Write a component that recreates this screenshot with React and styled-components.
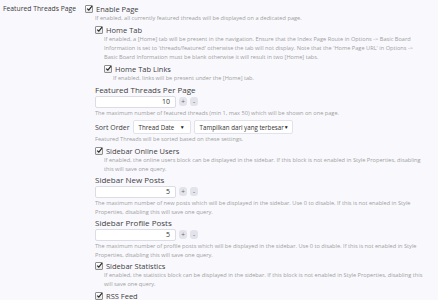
import React from "react";
import styled, { createGlobalStyle } from "styled-components";

const Global = createGlobalStyle`
  html, body { margin: 0; padding: 0; background: #f9f9fd; }
  body { font-family: "Open Sans", "Liberation Sans", sans-serif; color: #3c3c3c; }
`;

const Page = styled.div`
  width: 438px;
  height: 300px;
  overflow: hidden;
  background: #f9f9fd;
  padding-top: 4px;
  box-sizing: border-box;
`;

const FormRow = styled.div`
  display: flex;
`;

const RowLabel = styled.div`
  width: 82px;
  padding-left: 3px;
  font-size: 6.8px;
  line-height: 10px;
  color: #3a3a3a;
  flex-shrink: 0;
  white-space: nowrap;
`;

const Controls = styled.div`
  display: flex;
  flex-direction: column;
  flex: 1;
`;

const Item = styled.div`
  display: flex;
  flex-direction: column;
  margin-top: ${(p) => p.$mt ?? 0}px;
  padding-left: ${(p) => p.$indent ?? 0}px;
`;

const CheckLine = styled.label`
  display: flex;
  align-items: center;
  height: 10px;
  font-size: 7.5px;
  color: #3d3d3d;
  white-space: nowrap;
`;

const Box = styled.span`
  width: 6px;
  height: 6px;
  border: 1px solid #8f8f8f;
  border-radius: 1px;
  background: linear-gradient(#ffffff, #e6e6e6);
  margin-right: 3px;
  position: relative;
  flex-shrink: 0;
  svg { position: absolute; left: 0; top: -1px; }
`;

const Hint = styled.div`
  font-size: 5.65px;
  line-height: 9px;
  color: #a0a0a0;
  white-space: nowrap;
  padding-left: ${(p) => p.$indent ?? 0}px;
  margin-top: ${(p) => p.$mt ?? 0}px;
`;

const FieldTitle = styled.div`
  font-size: 8px;
  line-height: 11px;
  color: #3d3d3d;
  white-space: nowrap;
`;

const SpinRow = styled.div`
  display: flex;
  align-items: center;
  gap: 3px;
  height: 13px;
`;

const NumInput = styled.div`
  width: 81px;
  height: 12px;
  box-sizing: border-box;
  border: 1px solid #dcdce4;
  border-radius: 2px;
  background: #fff;
  font-size: 7px;
  line-height: 10px;
  text-align: right;
  padding-right: 5px;
  color: #333;
`;

const SpinButton = styled.span`
  width: 8px;
  height: 9px;
  border-radius: 3px;
  background: #e3e3ec;
  color: #666;
  font-size: 6.5px;
  line-height: 9px;
  text-align: center;
`;

const SortRow = styled.div`
  display: flex;
  align-items: center;
  height: 16px;
  gap: 3px;
  font-size: 7px;
  color: #3d3d3d;
  white-space: nowrap;
`;

const Select = styled.div`
  width: ${(p) => p.$w}px;
  height: 14px;
  box-sizing: border-box;
  border: 1px solid #e2e2ea;
  border-radius: 2px;
  background: #fff;
  display: flex;
  align-items: center;
  justify-content: space-between;
  padding: 0 5px 0 5px;
  font-size: 6.2px;
  color: #333;
  white-space: nowrap;
`;

const Arrow = styled.span`
  font-size: 5px;
  color: #222;
`;

function Check({ children }) {
  return (
    <CheckLine>
      <Box>
        <svg width="7" height="7" viewBox="0 0 7 7">
          <path d="M1.2 3.6 L2.8 5.2 L6 1.2" fill="none" stroke="#2a2a2a" strokeWidth="1.2" />
        </svg>
      </Box>
      {children}
    </CheckLine>
  );
}

function Spin({ value }) {
  return (
    <SpinRow>
      <NumInput>{value}</NumInput>
      <SpinButton>+</SpinButton>
      <SpinButton>-</SpinButton>
    </SpinRow>
  );
}

export default function App() {
  return (
    <Page>
      <Global />
      <FormRow>
        <RowLabel>Featured Threads Page</RowLabel>
        <Controls>
          <Check>Enable Page</Check>
          <Item $indent={10}>
            <Hint>If enabled, all currently featured threads will be displayed on a dedicated page.</Hint>
            <Item $mt={2}>
              <Check>Home Tab</Check>
              <Hint $indent={9}>
                If enabled, a [Home] tab will be present in the navigation. Ensure that the Index Page Route in Options -&gt; Basic Board
                <br />
                Information is set to 'threads/featured' otherwise the tab will not display. Note that the 'Home Page URL' in Options -&gt;
                <br />
                Basic Board Information must be blank otherwise it will result in two [Home] tabs.
              </Hint>
              <Item $mt={2} $indent={9}>
                <Check>Home Tab Links</Check>
                <Hint $indent={9}>If enabled, links will be present under the [Home] tab.</Hint>
              </Item>
            </Item>
            <Item $mt={1}>
              <FieldTitle>Featured Threads Per Page</FieldTitle>
              <Spin value="10" />
              <Hint $mt={1}>
                The maximum number of featured threads (min 1, max 50) which will be shown on one page.
              </Hint>
            </Item>
            <Item $mt={1}>
              <SortRow>
                Sort Order
                <Select $w={58}>Thread Date<Arrow>▼</Arrow></Select>
                <Select $w={99}>Tampilkan dari yang terbesar<Arrow>▼</Arrow></Select>
              </SortRow>
              <Hint>Featured Threads will be sorted based on these settings.</Hint>
            </Item>
            <Item $mt={2}>
              <Check>Sidebar Online Users</Check>
              <Hint $indent={9}>
                If enabled, the online users block can be displayed in the sidebar. If this block is not enabled in Style Properties, disabling
                <br />
                this will save one query.
              </Hint>
            </Item>
            <Item>
              <FieldTitle>Sidebar New Posts</FieldTitle>
              <Spin value="5" />
              <Hint $mt={1}>
                The maximum number of new posts which will be displayed in the sidebar. Use 0 to disable. If this is not enabled in Style
                <br />
                Properties, disabling this will save one query.
              </Hint>
            </Item>
            <Item>
              <FieldTitle>Sidebar Profile Posts</FieldTitle>
              <Spin value="5" />
              <Hint $mt={1}>
                The maximum number of profile posts which will be displayed in the sidebar. Use 0 to disable. If this is not enabled in Style
                <br />
                Properties, disabling this will save one query.
              </Hint>
            </Item>
            <Item $mt={1}>
              <Check>Sidebar Statistics</Check>
              <Hint $indent={9}>
                If enabled, the statistics block can be displayed in the sidebar. If this block is not enabled in Style Properties, disabling this
                <br />
                will save one query.
              </Hint>
            </Item>
            <Item $mt={2}>
              <Check>RSS Feed</Check>
            </Item>
          </Item>
        </Controls>
      </FormRow>
    </Page>
  );
}
